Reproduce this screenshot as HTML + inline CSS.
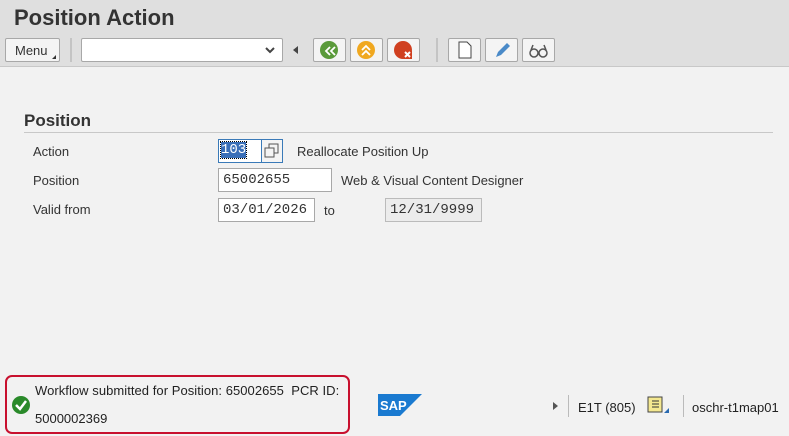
<!DOCTYPE html>
<html><head><style>
body{margin:0;width:789px;height:436px;background:#f2f2f2;font-family:"Liberation Sans",Arial,sans-serif;position:relative;overflow:hidden;color:#333}
.a{position:absolute}
.hdr{left:0;top:0;width:789px;height:66px;background:#dfdfdf;border-bottom:1px solid #c8c8c8}
.btn{position:absolute;top:38px;height:24px;background:#f4f4f4;border:1px solid #a8a8a8;box-sizing:border-box;border-radius:2px}
.sep{position:absolute;top:38px;width:2px;height:24px;background:#c4c4c4}
.lbl{font-size:13px;color:#333}
.inp{position:absolute;background:#fff;border:1px solid #a8a8a8;box-sizing:border-box;font-family:"Liberation Mono",monospace;font-size:14px;padding:3px 0 0 4px;height:24px}
</style></head><body>
<div class="a hdr"></div>
<div class="a" style="left:14px;top:5px;font-size:22px;font-weight:bold;color:#333">Position Action</div>
<div class="btn" style="left:5px;width:55px;font-size:13px;padding:4px 0 0 9px">Menu</div>
<div class="a" style="left:52px;top:55px;border-left:4px solid transparent;border-bottom:4px solid #333"></div>
<div class="sep" style="left:70px"></div>
<div class="btn" style="left:81px;width:202px;background:#fff"></div>
<svg class="a" style="left:264px;top:45px" width="12" height="10"><path d="M2 3 L6 7 L10 3" stroke="#444" stroke-width="2" fill="none"/></svg>
<div class="a" style="left:293px;top:46px;border-right:5px solid #444;border-top:4px solid transparent;border-bottom:4px solid transparent"></div>
<div class="btn" style="left:313px;width:33px"><svg width="31" height="22"><circle cx="15" cy="11" r="9" fill="#5a9a3a"/><path d="M16 8l-4 4 4 4M21 8l-4 4 4 4" stroke="#fff" stroke-width="1.8" fill="none"/></svg></div>
<div class="btn" style="left:350px;width:33px"><svg width="31" height="22"><circle cx="15" cy="11" r="9" fill="#f0a820"/><path d="M11 11l4-4 4 4M11 16l4-4 4 4" stroke="#fff" stroke-width="1.8" fill="none"/></svg></div>
<div class="btn" style="left:387px;width:33px"><svg width="31" height="22"><circle cx="15" cy="11" r="9" fill="#d04020"/><rect x="16" y="12" width="8" height="8" fill="#d04020"/><path d="M17 13l5 5M22 13l-5 5" stroke="#fff" stroke-width="2"/></svg></div>
<div class="sep" style="left:436px"></div>
<div class="btn" style="left:448px;width:33px"><svg width="31" height="22"><path d="M10 3h8l4 4v12h-12z" fill="#fff" stroke="#444"/></svg></div>
<div class="btn" style="left:485px;width:33px"><svg width="31" height="22"><path d="M10 18l2-5 9-9 3 3-9 9z" fill="#4a8ac8"/></svg></div>
<div class="btn" style="left:522px;width:33px"><svg width="31" height="22"><circle cx="11" cy="14" r="4" fill="none" stroke="#555" stroke-width="1.5"/><circle cx="20" cy="14" r="4" fill="none" stroke="#555" stroke-width="1.5"/><path d="M8 11l2-5M23 11l-2-5" stroke="#555" stroke-width="1.5"/></svg></div>

<div class="a" style="left:24px;top:111px;font-size:17px;font-weight:bold;color:#333">Position</div>
<div class="a" style="left:24px;top:132px;width:749px;height:1px;background:#c8c8c8"></div>
<div class="a lbl" style="left:33px;top:144px">Action</div>
<div class="a lbl" style="left:33px;top:173px">Position</div>
<div class="a lbl" style="left:33px;top:202px">Valid from</div>
<div class="inp" style="left:218px;top:139px;width:44px;border:1px solid #3a7ab8;padding:2px 0 0 2px"><span style="background:#3a6fb8;color:#fff;outline:1px dotted #000">103</span></div>
<div class="a" style="left:261px;top:139px;width:22px;height:24px;border:1px solid #3a7ab8;box-sizing:border-box;background:#f4f4f4"><svg width="20" height="22"><rect x="7" y="4" width="9" height="9" fill="none" stroke="#555"/><rect x="3" y="8" width="9" height="9" fill="#f4f4f4" stroke="#555"/></svg></div>
<div class="a lbl" style="left:297px;top:144px">Reallocate Position Up</div>
<div class="inp" style="left:218px;top:168px;width:114px">65002655</div>
<div class="a lbl" style="left:341px;top:173px">Web &amp; Visual Content Designer</div>
<div class="inp" style="left:218px;top:198px;width:97px">03/01/2026</div>
<div class="a lbl" style="left:324px;top:203px">to</div>
<div class="inp" style="left:385px;top:198px;width:97px;background:#ececec;border-color:#bbb">12/31/9999</div>

<div class="a" style="left:5px;top:375px;width:345px;height:59px;border:2px solid #c8102e;border-radius:7px;box-sizing:border-box"></div>
<svg class="a" style="left:11px;top:395px" width="20" height="20"><circle cx="10" cy="10" r="9" fill="#2a8a2a"/><path d="M5 10l4 4 6-8" stroke="#fff" stroke-width="2.5" fill="none"/></svg>
<div class="a lbl" style="left:35px;top:383px;font-size:13px;color:#222;letter-spacing:0.05px">Workflow submitted for Position: 65002655&nbsp; PCR ID:</div>
<div class="a lbl" style="left:35px;top:411px;font-size:13px;color:#222">5000002369</div>
<svg class="a" style="left:378px;top:394px" width="44" height="22"><path d="M0 0H44L22 22H0Z" fill="#1a7ad0"/><text x="2" y="16" font-family="Liberation Sans" font-weight="bold" font-size="13" fill="#fff">SAP</text></svg>
<div class="a" style="left:553px;top:402px;border-left:5px solid #555;border-top:4px solid transparent;border-bottom:4px solid transparent"></div>
<div class="a" style="left:568px;top:395px;width:1px;height:22px;background:#bbb"></div>
<div class="a lbl" style="left:578px;top:400px;color:#222">E1T (805)</div>
<svg class="a" style="left:646px;top:395px" width="26" height="20"><rect x="2" y="2" width="14" height="15" fill="#f4e890" stroke="#444"/><path d="M6 6h7M6 9h7M6 12h7" stroke="#333"/><path d="M18 18l5-5v5z" fill="#2a6ab0"/></svg>
<div class="a" style="left:683px;top:395px;width:1px;height:22px;background:#bbb"></div>
<div class="a lbl" style="left:692px;top:400px;color:#222">oschr-t1map01</div>
</body></html>
